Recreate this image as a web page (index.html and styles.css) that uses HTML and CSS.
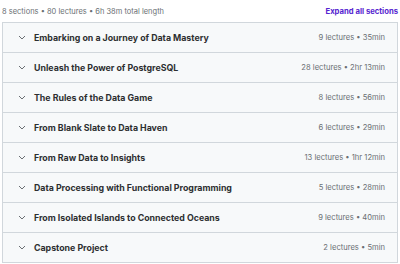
FILE: index.html
```html
<!DOCTYPE html>
<html lang="en">
<head>
  <meta charset="UTF-8" />
  <title>Course content</title>
  <link rel="stylesheet" href="styles.css">
</head>
<body>
  <div class="content">
    <div class="summary">
      <span class="meta">8 sections • 80 lectures • 6h 38m total length</span>
      <button class="expand">Expand all sections</button>
    </div>

    <div class="sections">
      <div class="section">
        <span class="chevron"><svg width="8" height="5" viewBox="0 0 8 5"><path d="M1 1l3 3 3-3" fill="none" stroke="#6a6f73" stroke-width="1"/></svg></span>
        <span class="title">Embarking on a Journey of Data Mastery</span>
        <span class="info">9 lectures • 35min</span>
      </div>
      <div class="section">
        <span class="chevron"><svg width="8" height="5" viewBox="0 0 8 5"><path d="M1 1l3 3 3-3" fill="none" stroke="#6a6f73" stroke-width="1"/></svg></span>
        <span class="title">Unleash the Power of PostgreSQL</span>
        <span class="info">28 lectures • 2hr 13min</span>
      </div>
      <div class="section">
        <span class="chevron"><svg width="8" height="5" viewBox="0 0 8 5"><path d="M1 1l3 3 3-3" fill="none" stroke="#6a6f73" stroke-width="1"/></svg></span>
        <span class="title">The Rules of the Data Game</span>
        <span class="info">8 lectures • 56min</span>
      </div>
      <div class="section">
        <span class="chevron"><svg width="8" height="5" viewBox="0 0 8 5"><path d="M1 1l3 3 3-3" fill="none" stroke="#6a6f73" stroke-width="1"/></svg></span>
        <span class="title">From Blank Slate to Data Haven</span>
        <span class="info">6 lectures • 29min</span>
      </div>
      <div class="section">
        <span class="chevron"><svg width="8" height="5" viewBox="0 0 8 5"><path d="M1 1l3 3 3-3" fill="none" stroke="#6a6f73" stroke-width="1"/></svg></span>
        <span class="title">From Raw Data to Insights</span>
        <span class="info">13 lectures • 1hr 12min</span>
      </div>
      <div class="section">
        <span class="chevron"><svg width="8" height="5" viewBox="0 0 8 5"><path d="M1 1l3 3 3-3" fill="none" stroke="#6a6f73" stroke-width="1"/></svg></span>
        <span class="title">Data Processing with Functional Programming</span>
        <span class="info">5 lectures • 28min</span>
      </div>
      <div class="section">
        <span class="chevron"><svg width="8" height="5" viewBox="0 0 8 5"><path d="M1 1l3 3 3-3" fill="none" stroke="#6a6f73" stroke-width="1"/></svg></span>
        <span class="title">From Isolated Islands to Connected Oceans</span>
        <span class="info">9 lectures • 40min</span>
      </div>
      <div class="section">
        <span class="chevron"><svg width="8" height="5" viewBox="0 0 8 5"><path d="M1 1l3 3 3-3" fill="none" stroke="#6a6f73" stroke-width="1"/></svg></span>
        <span class="title">Capstone Project</span>
        <span class="info">2 lectures • 5min</span>
      </div>
    </div>
  </div>
</body>
</html>
```

FILE: styles.css
```css
body {
  margin: 0;
  font-family: Inter, "Liberation Sans", sans-serif;
  color: #2d2f31;
  background: #fff;
}

.content {
  padding: 0 2px;
}

.summary {
  display: flex;
  justify-content: space-between;
  align-items: center;
  height: 22px;
}

.meta {
  font-size: 7.5px;
  color: #6a6f73;
}

.expand {
  border: none;
  background: none;
  padding: 0;
  font-family: inherit;
  font-size: 7.7px;
  font-weight: 700;
  color: #5624d0;
  cursor: pointer;
}

.sections {
  border: 1px solid #d1d7dc;
}

.section {
  display: flex;
  align-items: center;
  height: 29px;
  padding: 0 12px 0 15px;
  background: #f7f9fa;
  border-bottom: 1px solid #d1d7dc;
}

.section:last-child {
  border-bottom: none;
}

.chevron {
  display: flex;
  width: 16px;
}

.title {
  flex: 1;
  font-size: 8.8px;
  font-weight: 700;
}

.info {
  font-size: 7.6px;
  color: #6a6f73;
}
```
